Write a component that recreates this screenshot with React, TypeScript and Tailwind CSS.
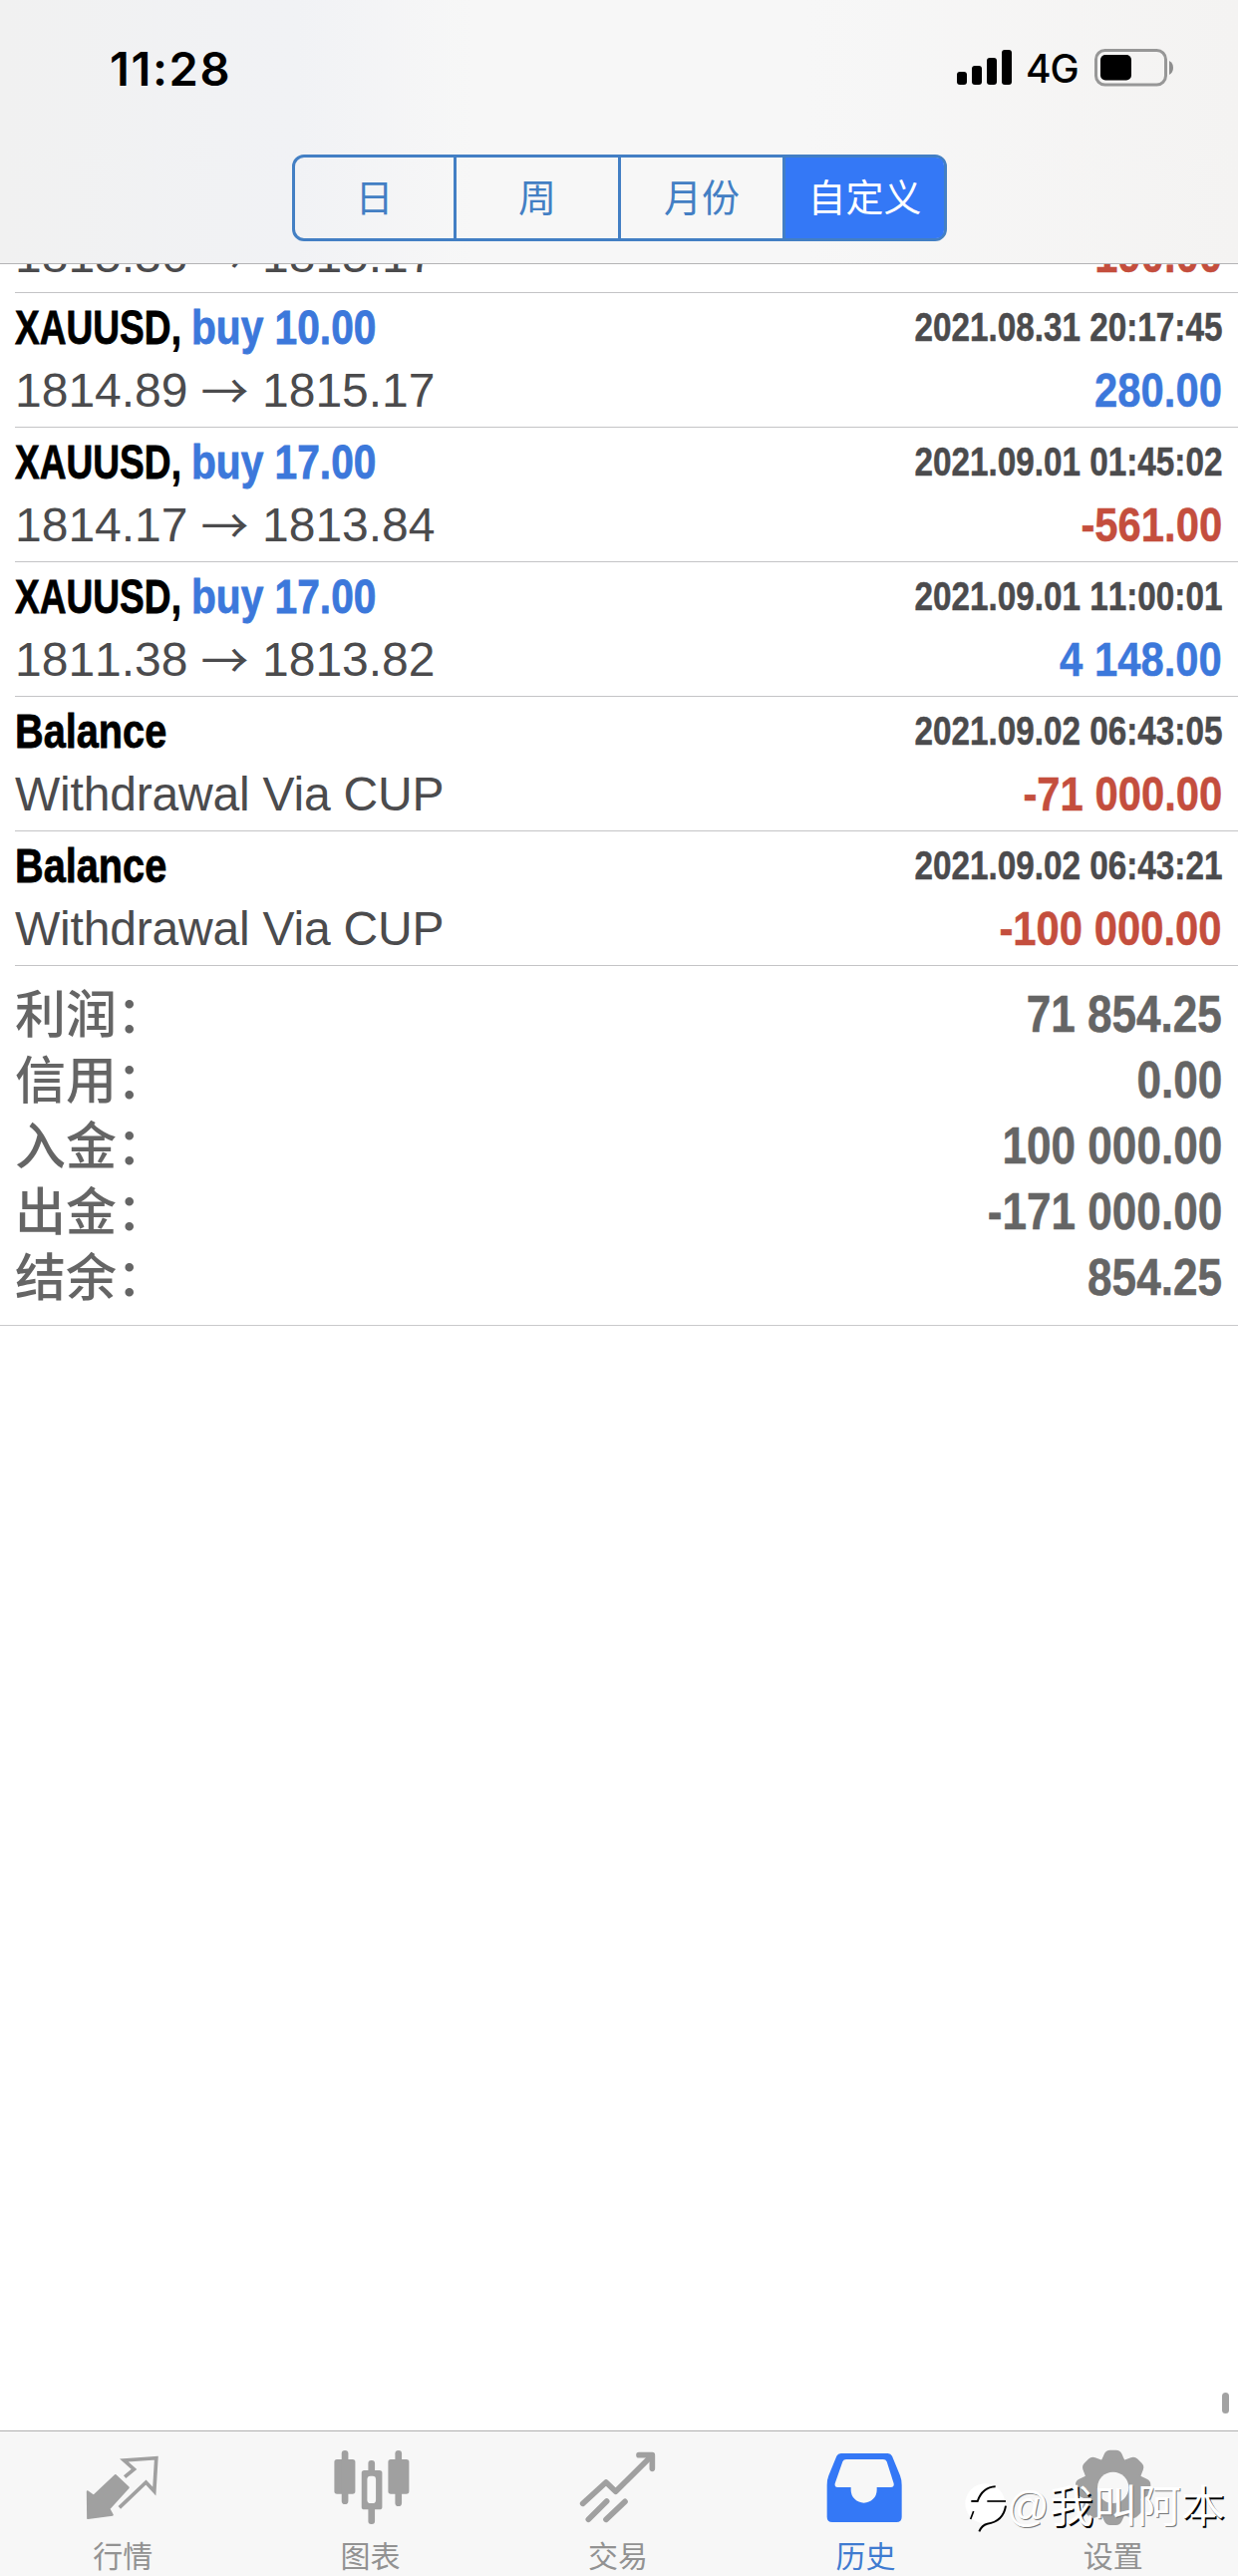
import type { ReactNode } from "react";
import clsx from "clsx";

interface Deal {
  symbol: string;
  action?: string;
  open?: string;
  close?: string;
  comment?: string;
  time: string;
  profit: string;
}

const deals: Deal[] = [
  { symbol: "XAUUSD,", action: "buy 10.00", open: "1815.36", close: "1815.17", time: "2021.08.31 20:15:32", profit: "-190.00" },
  { symbol: "XAUUSD,", action: "buy 10.00", open: "1814.89", close: "1815.17", time: "2021.08.31 20:17:45", profit: "280.00" },
  { symbol: "XAUUSD,", action: "buy 17.00", open: "1814.17", close: "1813.84", time: "2021.09.01 01:45:02", profit: "-561.00" },
  { symbol: "XAUUSD,", action: "buy 17.00", open: "1811.38", close: "1813.82", time: "2021.09.01 11:00:01", profit: "4 148.00" },
  { symbol: "Balance", comment: "Withdrawal Via CUP", time: "2021.09.02 06:43:05", profit: "-71 000.00" },
  { symbol: "Balance", comment: "Withdrawal Via CUP", time: "2021.09.02 06:43:21", profit: "-100 000.00" },
];

const summary = [
  ["利润", "71 854.25"],
  ["信用", "0.00"],
  ["入金", "100 000.00"],
  ["出金", "-171 000.00"],
  ["结余", "854.25"],
];

const periods = ["日", "周", "月份", "自定义"];

function StatusBar() {
  return (
    <div className="flex h-[136px] items-center justify-between pr-[64px] pl-[110px] font-['Inter',sans-serif] text-black">
      <span className="text-[47px] leading-none font-semibold tracking-[1.6px]">11:28</span>
      <div className="flex items-center">
        <svg width="56" height="36" viewBox="0 0 56 36" fill="currentColor">
          <rect x="0" y="22" width="10" height="13" rx="3" />
          <rect x="15" y="16" width="10" height="19" rx="3" />
          <rect x="30" y="8" width="10" height="27" rx="3" />
          <rect x="45" y="0" width="10" height="35" rx="3" />
        </svg>
        <span className="ml-[13px] w-[55px] text-[39px] leading-none font-medium tracking-[-1px]">4G</span>
        <svg className="ml-[14px]" width="80" height="38" viewBox="0 0 80 38">
          <rect x="1.5" y="1.5" width="70" height="34.5" rx="9" fill="none" stroke="#979797" strokeWidth="3" />
          <rect x="6" y="6" width="31" height="25.5" rx="5" fill="#000" />
          <path d="M75 12 Q79 14 79 19 Q79 24 75 26 Z" fill="#8e8e8e" />
        </svg>
      </div>
    </div>
  );
}

function PeriodPicker({ active }: { active: number }) {
  return (
    <div className="mt-[19px] ml-[293px] grid h-[87px] w-[657px] grid-cols-[162px_165px_165px_159px] divide-x-3 divide-[#437fc4] rounded-[12px] border-3 border-[#437fc4]">
      {periods.map((p, i) => (
        <div
          key={p}
          className={clsx(
            "flex items-center justify-center text-[38px] leading-[56px]",
            i === active ? "rounded-r-[8px] bg-[#3478f6] text-white" : "text-[#437fc4]",
          )}
        >
          {p}
        </div>
      ))}
    </div>
  );
}

function DealRow({ deal }: { deal: Deal }) {
  const negative = deal.profit.startsWith("-");
  return (
    <div className="ml-[15px] flex h-[135px] justify-between border-b border-[#c4c4c6] pr-[16px] whitespace-nowrap">
      <div>
        <div className="mt-[6px] flex h-[57px] items-center text-[49px] leading-none font-bold [-webkit-text-stroke:0.8px_currentColor]">
          <div className={deal.action ? "w-[177px]" : "w-[160px]"}>
            <span
              className={clsx(
                "inline-block origin-left text-black",
                deal.action ? "scale-x-[0.757]" : "scale-x-[0.81]",
              )}
            >
              {deal.symbol}
            </span>
          </div>
          {deal.action && (
            <span className="inline-block origin-left scale-x-[0.83] text-[#3c78db]">{deal.action}</span>
          )}
        </div>
        <div className="mt-[6px] flex h-[57px] items-center text-[48px] leading-none text-[#4b4b4d]">
          {deal.comment ? (
            <span className="tracking-[-0.2px]">{deal.comment}</span>
          ) : (
            <>
              <span className="w-[173px] [font-kerning:none]">{deal.open}</span>
              <span className="mb-[6px] w-[75px] text-center font-['Noto_Sans_CJK_SC']">→</span>
              <span className="[font-kerning:none]">{deal.close}</span>
            </>
          )}
        </div>
      </div>
      <div className="flex flex-col items-end font-bold [font-kerning:none]">
        <div className="mt-[5px] flex h-[57px] origin-right scale-x-[0.832] items-center text-[40px] leading-none text-[#4b4b4d] [-webkit-text-stroke:0.5px_currentColor]">
          {deal.time}
        </div>
        <div
          className={clsx(
            "mt-[7px] flex h-[57px] origin-right scale-x-[0.853] items-center text-[49px] leading-none [-webkit-text-stroke:0.5px_currentColor]",
            negative ? "text-[#c44e3d]" : "text-[#3c78db]",
          )}
        >
          {deal.profit}
        </div>
      </div>
    </div>
  );
}

function Summary() {
  return (
    <div className="h-[361px] border-b border-[#c9c9cb] pt-[17px] pr-[16px] pl-[15px] text-[#656565]">
      {summary.map(([label, value]) => (
        <div key={label} className="flex h-[66px] items-center justify-between whitespace-nowrap">
          <span className="text-[51px] leading-[66px] font-medium">{label}：</span>
          <span className="-mt-[3px] origin-right scale-x-[0.865] text-[51px] leading-none font-bold [font-kerning:none] [-webkit-text-stroke:0.5px_currentColor]">
            {value}
          </span>
        </div>
      ))}
    </div>
  );
}

function QuotesIcon() {
  return (
    <svg className="shrink-0" width="80" height="80" viewBox="132.6 72 240 240">
      <path
        d="M144 208 L162 221 L228 159 L267 196 L209 260 L219 278 L145 288 Z"
        fill="currentColor"
        stroke="currentColor"
        strokeWidth="6"
        strokeLinejoin="round"
      />
      <path
        d="M256 164 L284 141 L254 114 L351 107 L345 207 L320 180 L240 256"
        fill="none"
        stroke="currentColor"
        strokeWidth="11"
      />
    </svg>
  );
}

function ChartIcon() {
  return (
    <svg className="shrink-0" width="80" height="80" viewBox="877.8 72 240 240" fill="currentColor">
      <rect x="885" y="111" width="63" height="104" rx="8" />
      <rect x="907" y="84" width="20" height="162" rx="10" />
      <rect x="1047" y="111" width="63" height="104" rx="8" />
      <rect x="1068" y="84" width="20" height="168" rx="10" />
      <rect x="987" y="114" width="20" height="192" rx="9" />
      <rect x="967" y="144" width="62" height="118" rx="8" />
      <rect x="984" y="161" width="26" height="82" rx="10" fill="#f7f7f7" />
    </svg>
  );
}

function TradeIcon() {
  return (
    <svg
      className="shrink-0"
      width="80"
      height="80"
      viewBox="123 72 240 240"
      fill="none"
      stroke="currentColor"
      strokeWidth="17"
      strokeLinecap="round"
      strokeLinejoin="round"
    >
      <path d="M134 244 L204 180 L233 208 L342 100" />
      <path d="M303 98 H343 V139" />
      <path d="M151 292 L206 237" />
      <path d="M204 292 L261 238" />
    </svg>
  );
}

function HistoryIcon() {
  return (
    <svg className="shrink-0" width="80" height="80" viewBox="868 72 240 240" fill="currentColor">
      <path
        fillRule="evenodd"
        d="M912 93 H1053 Q1062 93 1066 101 L1090 160 Q1095 173 1095 188 V284 Q1095 300 1079 300 H886 Q870 300 870 284 V188 Q870 173 875 160 L899 101 Q903 93 912 93 Z M928 111 Q920 111 917 118 L894 184 Q892 195 902 195 H942 V203 A39 39 0 0 0 1020 203 V195 H1062 Q1073 195 1071 184 L1050 118 Q1047 111 1039 111 Z"
      />
    </svg>
  );
}

function SettingsIcon() {
  return (
    <svg className="shrink-0" width="80" height="80" viewBox="413 222 240 240" fill="currentColor">
      {[0, 45, 90, 135, 180, 225, 270, 315].map((angle) => (
        <path
          key={angle}
          transform={`rotate(${angle} 529 346)`}
          d="M490 272 Q499 254 503 244 Q508 233 520 233 H538 Q550 233 555 244 Q559 254 568 272 Z"
        />
      ))}
      <circle cx="529" cy="346" r="87" />
      <circle cx="529" cy="346" r="47" fill="#f7f7f7" />
    </svg>
  );
}

function Tab({ label, active, children }: { label: string; active?: boolean; children: ReactNode }) {
  return (
    <div className={clsx("flex flex-1 flex-col items-center", active ? "text-[#3478f6]" : "text-[#a0a0a0]")}>
      {children}
      <span
        className={clsx(
          "mt-[10px] -ml-[2px] text-[30px] leading-[41px]",
          active ? "text-[#3f7bd0]" : "text-[#929292]",
        )}
      >
        {label}
      </span>
    </div>
  );
}

function Watermark() {
  return (
    <div className="absolute right-[13px] bottom-[39px] flex h-[60px] items-center text-[44px] leading-[60px] text-white">
      <svg className="-mr-px" width="44" height="52" viewBox="78 338 132 156" fill="none">
        <circle cx="142" cy="405" r="60" fill="#fff" />
        <path d="M204 405 Q200 468 124 488 L142 440 Z" fill="#fff" />
        <path d="M100 398 H119 Q134 356 173 354" stroke="#000" strokeWidth="6" />
        <path d="M148 398 H204" stroke="#000" strokeWidth="5" />
        <path d="M204 412 Q196 460 148 466 Q132 470 124 489" stroke="#000" strokeWidth="6" />
        <path d="M98 452 L107 428" stroke="#000" strokeWidth="5" />
      </svg>
      <span className="w-[43px] text-[42px] [text-shadow:1px_1px_0_#777]">@</span>
      <span className="[text-shadow:1.5px_1.5px_0_#000]">我</span>
      <span className="[text-shadow:1px_1px_0_#777]">叫阿</span>
      <span className="[text-shadow:1.5px_1.5px_0_#000]">本</span>
    </div>
  );
}

export default function App() {
  return (
    <div className="relative flex h-[2584px] w-[1242px] flex-col overflow-hidden bg-white font-['Liberation_Sans','Noto_Sans_CJK_SC',sans-serif]">
      <header className="h-[265px] shrink-0 border-b border-[#b4b4b6] bg-linear-[90deg,#f1f1f1_0%,#f1f2f5_24%,#f7f7f7_38%,#f7f7f7_65%,#f4f3f2_100%]">
        <StatusBar />
        <PeriodPicker active={3} />
      </header>

      <main className="flex-1 overflow-hidden">
        {/* list is scrolled, the first deal sits mostly under the header */}
        <div className="-mt-[106px]">
          {deals.map((deal) => (
            <DealRow key={deal.time} deal={deal} />
          ))}
        </div>
        <Summary />
      </main>

      <div className="absolute right-[9px] bottom-[163px] h-[21px] w-[7px] rounded-full bg-[#a2a2a2]" />

      <nav className="flex h-[146px] shrink-0 border-t border-[#b0b0b0] bg-[#f7f7f7] pt-[15px]">
        <Tab label="行情">
          <QuotesIcon />
        </Tab>
        <Tab label="图表">
          <ChartIcon />
        </Tab>
        <Tab label="交易">
          <TradeIcon />
        </Tab>
        <Tab label="历史" active>
          <HistoryIcon />
        </Tab>
        <Tab label="设置">
          <SettingsIcon />
        </Tab>
      </nav>

      <Watermark />
    </div>
  );
}
